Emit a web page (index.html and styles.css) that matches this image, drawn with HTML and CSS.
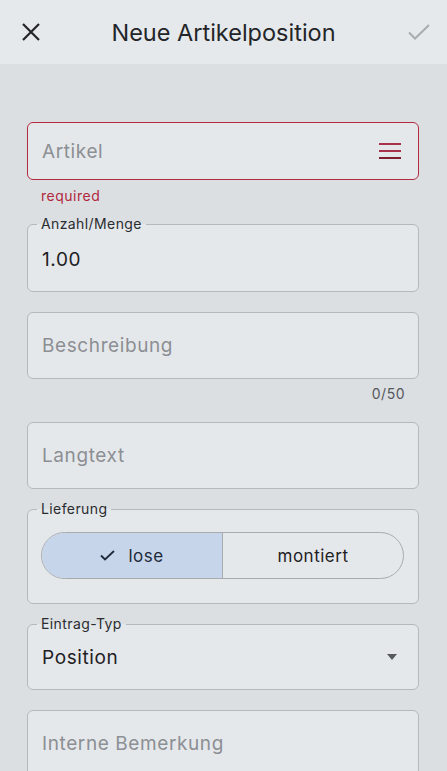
FILE: index.html
```html
<!DOCTYPE html>
<html lang="de">
<head>
    <meta charset="UTF-8">
    <meta name="viewport" content="width=device-width, initial-scale=1.0">
    <title>Neue Artikelposition</title>
    <link rel="stylesheet" href="styles.css">
</head>
<body>
    <div class="appbar">
        <button class="icon-btn close-btn" aria-label="Schließen">
            <svg width="18" height="18" viewBox="0 0 18 18">
                <path d="M1 1 L17 17 M17 1 L1 17" stroke="#222427" stroke-width="2.2" fill="none"/>
            </svg>
        </button>
        <h1 class="title">Neue Artikelposition</h1>
        <button class="icon-btn save-btn" aria-label="Speichern" disabled>
            <svg width="22" height="16" viewBox="0 0 22 16">
                <polyline points="1,8.5 7,14.5 21,1" stroke="#a9acaf" stroke-width="2" fill="none"/>
            </svg>
        </button>
    </div>

    <form class="form">
        <!-- Artikel (Pflichtfeld, Fehlerzustand) -->
        <div class="group">
            <div class="field field-error">
                <span class="placeholder">Artikel</span>
                <svg class="menu-icon" width="22" height="16" viewBox="0 0 22 16">
                    <rect x="0" y="0" width="22" height="2" fill="#a8324a"/>
                    <rect x="0" y="7" width="22" height="2" fill="#a8324a"/>
                    <rect x="0" y="14" width="22" height="2" fill="#7e2030"/>
                </svg>
            </div>
            <div class="helper error-text">required</div>
        </div>

        <div class="field field-qty">
            <span class="float-label">Anzahl/Menge</span>
            <span class="value">1.00</span>
        </div>

        <div class="group">
            <div class="field">
                <span class="placeholder">Beschreibung</span>
            </div>
            <div class="helper counter">0/50</div>
        </div>

        <div class="field">
            <span class="placeholder">Langtext</span>
        </div>

        <div class="field field-tall">
            <span class="float-label">Lieferung</span>
            <div class="segmented">
                <button type="button" class="segment selected">
                    <svg width="15" height="11" viewBox="0 0 15 11">
                        <polyline points="1,5.5 5,9.5 14,1" stroke="#1f2a3a" stroke-width="1.8" fill="none"/>
                    </svg>
                    lose
                </button>
                <button type="button" class="segment">montiert</button>
            </div>
        </div>

        <div class="field field-select">
            <span class="float-label">Eintrag-Typ</span>
            <span class="value">Position</span>
            <span class="arrow"></span>
        </div>

        <div class="field">
            <span class="placeholder">Interne Bemerkung</span>
        </div>
    </form>
</body>
</html>
```

FILE: styles.css
```css
body {
    margin: 0;
    font-family: Inter, "Noto Sans", sans-serif;
    background-color: #dcdfe2;
    color: #1e2023;
}

.appbar {
    display: grid;
    grid-template-columns: 56px 1fr 56px;
    align-items: center;
    height: 64px;
    background-color: #e6e9ec;
}

.icon-btn {
    display: flex;
    align-items: center;
    background: none;
    border: none;
    padding: 0;
}

.close-btn {
    justify-content: flex-start;
    padding-left: 22px;
}

.save-btn {
    justify-content: flex-end;
    padding-right: 17px;
}

.title {
    margin: 0;
    text-align: center;
    font-size: 23.5px;
    font-weight: 400;
    color: #232528;
}

.form {
    display: flex;
    flex-direction: column;
    gap: 20px;
    padding: 58px 28px 0 27px;
}

.field {
    position: relative;
    display: flex;
    align-items: center;
    height: 67px;
    box-sizing: border-box;
    padding: 0 17px 0 14px;
    background-color: #e5e8eb;
    border: 1px solid #b6b9bc;
    border-radius: 6px;
}

.field-error {
    height: 58px;
    border-color: #b32b40;
    justify-content: space-between;
}

.field-qty {
    height: 68px;
    padding-top: 3px;
}

.field-tall {
    height: 95px;
    align-items: flex-start;
    padding: 22px 14px 0 13px;
}

.field-select {
    height: 66px;
    justify-content: space-between;
    padding-right: 21px;
}

/* label sitting on the top border */
.float-label {
    position: absolute;
    top: -9px;
    left: 9px;
    padding: 0 4px;
    font-size: 14px;
    line-height: 16px;
    letter-spacing: 0.4px;
    color: #2a2c2f;
    background: linear-gradient(#dcdfe2 50%, #e5e8eb 50%);
}

.placeholder {
    font-size: 19px;
    letter-spacing: 0.6px;
    color: #8c8f93;
}

.value {
    font-size: 19px;
    letter-spacing: 0.6px;
    color: #1e2023;
}

.helper {
    font-size: 14px;
    line-height: 17px;
    letter-spacing: 0.5px;
    padding: 7px 14px 0;
}

.error-text {
    color: #b0283d;
}

.counter {
    text-align: right;
    padding-top: 6px;
    color: #55585c;
}

.arrow {
    width: 0;
    height: 0;
    border-left: 5.5px solid transparent;
    border-right: 5.5px solid transparent;
    border-top: 6px solid #58595c;
}

.segmented {
    display: flex;
    width: 100%;
    height: 47px;
    box-sizing: border-box;
    border: 1px solid #a9acaf;
    border-radius: 24px;
    overflow: hidden;
}

.segment {
    flex: 1;
    display: flex;
    align-items: center;
    justify-content: center;
    gap: 13px;
    border: none;
    background: none;
    font-family: inherit;
    font-size: 17px;
    font-weight: 400;
    letter-spacing: 0.5px;
    color: #1e2023;
}

.segment + .segment {
    border-left: 1px solid #a9acaf;
}

.segment.selected {
    background-color: #c6d5ea;
    color: #1f2a3a;
}
```
